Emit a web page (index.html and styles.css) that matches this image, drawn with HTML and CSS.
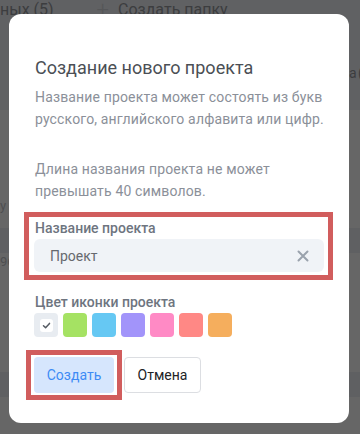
FILE: index.html
```html
<!DOCTYPE html>
<html lang="ru">
<head>
<meta charset="utf-8">
<link rel="stylesheet" href="styles.css">
</head>
<body>
<div class="page">
  <div class="page-head">
    <div class="tabs">
      <span class="tab">ных (5)</span>
      <span class="add"><span class="plus">+</span>Создать папку</span>
    </div>
    <div class="head-right">а (</div>
  </div>
  <div class="gap-a"><span class="edge-text">у</span></div>
  <div class="band"></div>
  <div class="gap-b"><span class="edge-text">96</span></div>
  <div class="band"></div>
</div>

<div class="modal">
  <h1 class="title">Создание нового проекта</h1>
  <p class="hint">Название проекта может состоять из букв русского, английского алфавита или цифр.</p>
  <p class="hint hint-2">Длина названия проекта не может превышать 40 символов.</p>

  <div class="mark mark-field">
    <div class="label">Название проекта</div>
    <div class="input">
      <span class="input-text">Проект</span>
      <svg class="clear" width="14" height="14" viewBox="0 0 14 14"><path d="M2.5 2.5 L11.5 11.5 M11.5 2.5 L2.5 11.5" stroke="#9aa2ad" stroke-width="2" stroke-linecap="round"/></svg>
    </div>
  </div>

  <div class="label label-color">Цвет иконки проекта</div>
  <div class="swatches">
    <div class="swatch sw-none"><span class="check"><svg width="9" height="9" viewBox="0 0 9 9"><path d="M1.5 4.8 L3.6 6.8 L7.5 2.4" stroke="#555b63" stroke-width="1.5" fill="none" stroke-linecap="round" stroke-linejoin="round"/></svg></span></div>
    <div class="swatch sw-green"></div>
    <div class="swatch sw-blue"></div>
    <div class="swatch sw-purple"></div>
    <div class="swatch sw-pink"></div>
    <div class="swatch sw-coral"></div>
    <div class="swatch sw-orange"></div>
  </div>

  <div class="actions">
    <div class="mark mark-btn"><button class="btn btn-primary">Создать</button></div>
    <button class="btn btn-secondary">Отмена</button>
  </div>
</div>
</body>
</html>
```
FILE: styles.css
```css
* { box-sizing: border-box; }
html, body { margin: 0; padding: 0; }
body {
  width: 360px;
  height: 434px;
  overflow: hidden;
  background: #666666;
  font-family: Roboto, "Noto Sans", sans-serif;
  position: relative;
}
.page { width: 360px; }
.page-head {
  height: 110px;
  background: #606163;
  position: relative;
}
.tabs {
  display: flex;
  align-items: center;
  gap: 43px;
  height: 18px;
  font-size: 16px;
  color: #3c3d3f;
  line-height: 18px;
  padding-top: 1px;
}
.tabs .tab, .tabs .add { white-space: nowrap; display: flex; align-items: center; }
.plus { font-size: 22px; font-weight: 300; color: #555658; margin-right: 9px; }
.head-right {
  margin-top: 47px;
  margin-left: 349px;
  font-size: 14px;
  letter-spacing: -1px;
  color: #3c3d3f;
  white-space: nowrap;
}
.gap-a { height: 118px; position: relative; }
.gap-b { height: 119px; position: relative; }
.band { height: 25px; background: #5f6062; }
.edge-text {
  position: absolute;
  left: 0;
  font-size: 13px;
  color: #4e4f51;
}
.gap-a .edge-text { top: 88px; }
.gap-b .edge-text { top: 1px; }

.modal {
  position: absolute;
  left: 9px;
  top: 14px;
  width: 340px;
  height: 409px;
  background: #ffffff;
  border-radius: 12px;
  padding: 42px 20px 30px 26px;
}
.title {
  margin: 0;
  font-size: 18px;
  line-height: 24px;
  font-weight: 400;
  color: #4b4f55;
}
.hint {
  margin: 6px 0 0;
  font-size: 14px;
  line-height: 22px;
  color: #8b9099;
  letter-spacing: 0.15px;
}
.hint-2 { margin-top: 28px; }

.mark {
  border: 5px solid #d15d5d;
}
.mark-field {
  margin: 10px -4px 12px -11px;
  padding: 1px 4px 3px 5px;
}
.label {
  font-size: 14px;
  line-height: 20px;
  font-weight: 500;
  color: #6e757f;
  margin-bottom: 1px;
}
.mark-field .label { margin-left: 1px; }
.input {
  height: 33px;
  background: #f0f3f7;
  border-radius: 6px;
  display: flex;
  align-items: center;
  justify-content: space-between;
  padding: 0 14px 0 16px;
}
.input-text {
  font-size: 14px;
  color: #66696e;
}
.swatches {
  display: flex;
  gap: 5px;
  margin-left: -1px;
}
.swatch {
  width: 24px;
  height: 24px;
  border-radius: 4px;
}
.sw-none {
  background: #e8ecf1;
  display: flex;
  align-items: center;
  justify-content: center;
}
.check {
  width: 13px;
  height: 13px;
  background: #fff;
  border-radius: 3px;
  display: flex;
  align-items: center;
  justify-content: center;
}
.sw-green { background: #a5e263; }
.sw-blue { background: #66c8f3; }
.sw-purple { background: #a294fa; }
.sw-pink { background: #ff8ac5; }
.sw-coral { background: #ff8885; }
.sw-orange { background: #f5ae5d; }

.actions {
  display: flex;
  align-items: center;
  gap: 2px;
  margin-top: 20px;
  margin-left: -1px;
}
.mark-btn {
  padding: 2px 3px;
  margin: -7px 0 -7px -8px;
}
.btn {
  height: 36px;
  border-radius: 4px;
  font-family: Roboto, "Noto Sans", sans-serif;
  font-size: 14px;
  padding: 0;
  cursor: pointer;
}
.btn-primary {
  width: 80px;
  background: #d6e6fd;
  border: none;
  color: #3d8bf5;
  display: block;
}
.btn-secondary {
  width: 77px;
  background: #fff;
  border: 1px solid #dcdee2;
  color: #222326;
}
```
